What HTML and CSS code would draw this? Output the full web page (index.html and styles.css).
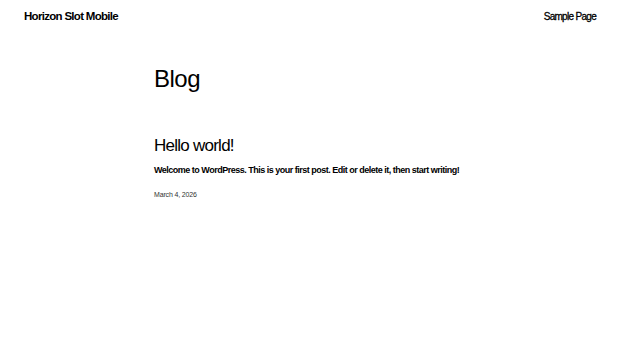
FILE: index.html
```html
<html>
    <head>
        <link rel="stylesheet" href="styles.css">
        <title>Blog</title>
    </head>
    <body>
        <header class="site-header">
            <a class="site-title" href="#">Horizon Slot Mobile</a>
            <nav class="site-nav">
                <a href="#">Sample Page</a>
            </nav>
        </header>
        <main class="content">
            <h1 class="page-title">Blog</h1>
            <article class="post">
                <h2 class="post-title"><a href="#">Hello world!</a></h2>
                <p class="post-excerpt">Welcome to WordPress. This is your first post. Edit or delete it, then start writing!</p>
                <div class="post-date">March 4, 2026</div>
            </article>
        </main>
    </body>
</html>
```

FILE: styles.css
```css
body {
    margin: 0;
    background-color: #fff;
    color: #000;
}
* {
    box-sizing: border-box;
    font-family: "Liberation Sans", Arial, sans-serif;
}
a {
    color: inherit;
    text-decoration: none;
}
.site-header {
    display: flex;
    justify-content: space-between;
    align-items: center;
    padding: 10px 24px 0 24px;
}
.site-title {
    font-size: 11.5px;
    font-weight: bold;
    letter-spacing: -0.7px;
}
.site-nav a {
    font-size: 10px;
    letter-spacing: -0.7px;
    -webkit-text-stroke: 0.3px #000;
}
.content {
    width: 312px;
    margin: 0 auto;
    padding-top: 43px;
}
.page-title {
    margin: 0;
    font-size: 24px;
    font-weight: normal;
    line-height: 1.2;
    letter-spacing: -0.5px;
}
.post {
    margin-top: 42px;
}
.post-title {
    margin: 0;
    font-size: 17px;
    font-weight: normal;
    line-height: 1.2;
    letter-spacing: -0.75px;
}
.post-excerpt {
    margin: 9px 0 0 0;
    font-size: 9px;
    font-weight: bold;
    letter-spacing: -0.5px;
    white-space: nowrap;
}
.post-date {
    margin-top: 16px;
    font-size: 7px;
    color: #333;
    letter-spacing: -0.15px;
}
```
